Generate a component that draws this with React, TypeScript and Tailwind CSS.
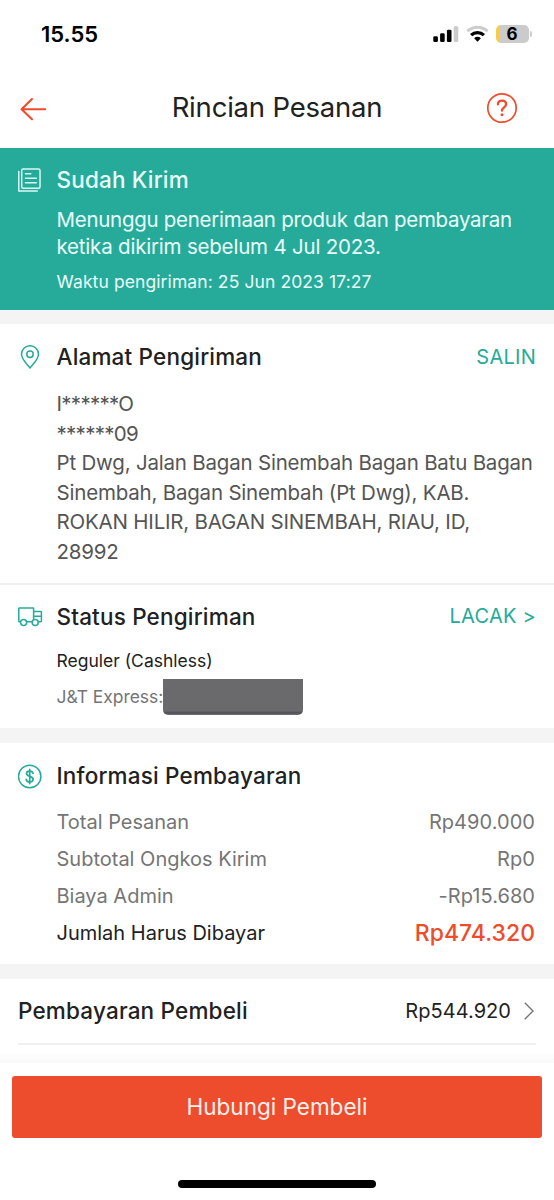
import React from 'react';

interface PaymentRow {
  label: string;
  value: string;
}

const paymentRows: PaymentRow[] = [
  { label: 'Total Pesanan', value: 'Rp490.000' },
  { label: 'Subtotal Ongkos Kirim', value: 'Rp0' },
  { label: 'Biaya Admin', value: '-Rp15.680' },
];

const StatusBar: React.FC = () => (
  <div className="flex h-[68px] items-center justify-between pl-[41px] pr-[22px]">
    <span className="text-[22px] font-semibold leading-none text-black">15.55</span>
    <div className="flex items-center">
      {/* Signal */}
      <svg width="26" height="18" viewBox="0 0 26 18">
        <rect x="0.3" y="11.2" width="4.6" height="5.8" rx="1.3" fill="#000" />
        <rect x="7.1" y="8.2" width="4.6" height="8.8" rx="1.3" fill="#000" />
        <rect x="13.9" y="4.8" width="4.6" height="12.2" rx="1.3" fill="#000" />
        <rect x="20.7" y="1.2" width="4.6" height="15.8" rx="1.3" fill="#cbcbcb" />
      </svg>
      {/* Wifi */}
      <svg className="ml-[7px]" width="23" height="18" viewBox="0 0 23 18" fill="none">
        <path d="M1.4 6.3A14.4 14.4 0 0 1 21.6 6.3" stroke="#cbcbcb" strokeWidth="3" />
        <path d="M5.1 10.2A9.1 9.1 0 0 1 17.9 10.2" stroke="#000" strokeWidth="3.2" />
        <path d="M8.1 13.2A4.9 4.9 0 0 1 14.9 13.2L11.5 16.8Z" fill="#000" />
      </svg>
      {/* Battery */}
      <div className="ml-[7px] flex h-[18px] w-[33px] items-center justify-center overflow-hidden rounded-[5px] bg-[linear-gradient(to_right,#f8cc46_3px,#cbcbcb_3px)]">
        <span className="text-[17px] font-bold leading-none text-black">6</span>
      </div>
      <div className="ml-[1.5px] h-[6px] w-[2px] rounded-r-full bg-[#cbcbcb]"></div>
    </div>
  </div>
);

const Header: React.FC = () => (
  <div className="flex h-20 items-center pl-5 pr-9">
    <svg className="mt-[2px]" width="27" height="24" viewBox="0 0 27 24" fill="none" stroke="#ee4d2d" strokeWidth="2.1" strokeLinecap="round" strokeLinejoin="round">
      <path d="M12 2L1.6 12.2L12 22.2M1.6 12.2H25.2" />
    </svg>
    <h1 className="flex-1 pl-[21px] text-center text-[27.5px] leading-none tracking-[-0.2px] text-[#212121]">Rincian Pesanan</h1>
    <svg width="32" height="32" viewBox="0 0 32 32" fill="none" stroke="#ee4d2d" strokeLinecap="round">
      <circle cx="16" cy="16" r="14.2" strokeWidth="1.7" />
      <path d="M11.9 12.4C12 10 13.7 8.7 16 8.7C18.3 8.7 20.1 10.1 20.1 12.3C20.1 15.2 16 15.5 16 18.7" strokeWidth="2.3" />
      <circle cx="16" cy="22.8" r="1.5" fill="#ee4d2d" stroke="none" />
    </svg>
  </div>
);

const NoteIcon: React.FC = () => (
  <svg width="23" height="24" viewBox="0.4 0 23.6 24" preserveAspectRatio="none" fill="none" stroke="#d9fbf4" strokeWidth="1.5" strokeLinecap="round" strokeLinejoin="round">
    <rect x="4.2" y="1" width="18.8" height="19.2" rx="1.5" />
    <path d="M1.2 3.6V22.9H20.2M8 5.8H13.6M8 10.3H19.2M8 14.8H19.2" />
  </svg>
);

const PinIcon: React.FC = () => (
  <svg width="24" height="24" viewBox="0 0 24 24" fill="none" stroke="#26aa99" strokeWidth="1.5" strokeLinejoin="round">
    <path d="M12 23C9.2 19.2 3.5 14.2 3.5 9.2A8.5 8.4 0 0 1 20.5 9.2C20.5 14.2 14.8 19.2 12 23Z" />
    <circle cx="12" cy="9.2" r="3.2" />
  </svg>
);

const TruckIcon: React.FC = () => (
  <svg width="25" height="20" viewBox="0.4 0 25 20" fill="none" stroke="#26aa99" strokeWidth="1.5" strokeLinejoin="round">
    <path d="M2.9 14.8H1.8A0.6 0.6 0 0 1 1.2 14.2V1.6A0.6 0.6 0 0 1 1.8 1H15.4A0.6 0.6 0 0 1 16 1.6V13M9 14.8H14.6M16 4.4H23A0.8 0.8 0 0 1 23.8 5.2V14A0.8 0.8 0 0 1 23 14.8H20.6M16.4 9.2H23.6" />
    <circle cx="6" cy="15.4" r="3" />
    <circle cx="17.6" cy="15.4" r="3" />
  </svg>
);

const DollarIcon: React.FC = () => (
  <svg width="25" height="25" viewBox="0.8 0 25 25" fill="none" stroke="#26aa99" strokeWidth="1.5" strokeLinecap="round">
    <circle cx="12.5" cy="12.5" r="11.2" />
    <path d="M15.8 9.4C15.6 7.9 14.3 7.1 12.5 7.1C10.7 7.1 9.3 8 9.3 9.6C9.3 13.1 15.9 11.7 15.9 15.2C15.9 16.9 14.4 17.9 12.5 17.9C10.6 17.9 9.2 17 9 15.3M12.5 5.4V19.6" strokeWidth="1.7" />
  </svg>
);

interface SectionTitleProps {
  icon: React.ReactNode;
  title: string;
  action?: React.ReactNode;
}

const SectionTitle: React.FC<SectionTitleProps> = ({ icon, title, action }) => (
  <div className="flex h-7 items-center">
    <div className="flex w-[38.5px] flex-shrink-0 items-center">{icon}</div>
    <h2 className="flex-1 text-[22.5px] font-medium leading-7 tracking-[0.18px]">{title}</h2>
    {action && <button className="text-[20px] leading-7 tracking-[0.25px] text-[#26aa99]">{action}</button>}
  </div>
);

const App: React.FC = () => {
  return (
    <div className="flex h-[1200px] w-[554px] flex-col overflow-hidden bg-white font-['Inter',sans-serif] text-[#212121]">
      <StatusBar />
      <Header />

      {/* Order status */}
      <section className="h-[162px] bg-[#26aa99] pl-[18px] pr-[18px] pt-[18px] text-[#e9fffb]">
        <SectionTitle icon={<NoteIcon />} title="Sudah Kirim" />
        <div className="pl-[38.5px]">
          <p className="mt-[13px] whitespace-nowrap text-[20.5px] leading-[26.5px] tracking-[-0.28px]">
            Menunggu penerimaan produk dan pembayaran
            <br />
            <span className="tracking-[-0.2px]">ketika dikirim sebelum 4 Jul 2023.</span>
          </p>
          <p className="mt-[10px] text-[17.5px] leading-6 tracking-[0.1px]">Waktu pengiriman: 25 Jun 2023 17:27</p>
        </div>
      </section>
      <div className="h-[14px] bg-[#f4f4f4]"></div>

      {/* Shipping address */}
      <section className="h-[261px] border-b-2 border-[#f0f0f0] px-[18px] pt-[19px]">
        <SectionTitle icon={<PinIcon />} title="Alamat Pengiriman" action="SALIN" />
        <div className="mt-[18px] whitespace-nowrap pl-[38.5px] text-[20.5px] leading-[29.6px] tracking-[-0.2px] text-[#555]">
          <p className="tracking-[-0.72px]">I******O</p>
          <p className="tracking-[-0.72px]">******09</p>
          <p>
            Pt Dwg, Jalan Bagan Sinembah Bagan Batu Bagan
            <br />
            Sinembah, Bagan Sinembah (Pt Dwg), KAB.
            <br />
            ROKAN HILIR, BAGAN SINEMBAH, RIAU, ID,
            <br />
            28992
          </p>
        </div>
      </section>

      {/* Shipping status */}
      <section className="h-[143px] px-[18px] pt-[18px]">
        <SectionTitle
          icon={<TruckIcon />}
          title="Status Pengiriman"
          action={<span className="block pb-[3px]">LACAK &gt;</span>}
        />
        <div className="pl-[38.5px] text-[17.5px]">
          <p className="mt-[18px] leading-6">Reguler (Cashless)</p>
          <div className="mt-[5px] flex h-[37px] items-center">
            <span className="w-[106.5px] whitespace-nowrap pt-px leading-6 tracking-[-0.05px] text-[#757575]">J&amp;T Express:</span>
            <span className="h-[36px] w-[140px] rounded-b-[5px] bg-[linear-gradient(to_bottom,#6a6a6c_32px,#4b4c56_34px,#77777c_36px)]"></span>
          </div>
        </div>
      </section>
      <div className="h-[15px] bg-[#f4f4f4]"></div>

      {/* Payment info */}
      <section className="h-[221px] px-[18px] pt-[19px]">
        <SectionTitle icon={<DollarIcon />} title="Informasi Pembayaran" />
        <div className="mt-[14px] pl-[38.5px] pr-px text-[20px] leading-[37px]">
          {paymentRows.map(row => (
            <div key={row.label} className="flex justify-between text-[#757575]">
              <span>{row.label}</span>
              <span className="tracking-[0.05px]">{row.value}</span>
            </div>
          ))}
          <div className="flex justify-between">
            <span>Jumlah Harus Dibayar</span>
            <span className="text-[23px] font-medium text-[#ee4d2d]">Rp474.320</span>
          </div>
        </div>
      </section>
      <div className="h-[15px] bg-[#f4f4f4]"></div>

      {/* Buyer payment */}
      <section className="h-[84px] bg-[linear-gradient(to_bottom,#fff_72px,#f9f9f9_84px)] px-[18px]">
        <div className="flex h-[66px] items-center border-b-2 border-[#f0f0f0]">
          <h2 className="flex-1 text-[22.5px] font-medium tracking-[0.18px]">Pembayaran Pembeli</h2>
          <span className="text-[20px] tracking-[0.05px]">Rp544.920</span>
          <svg className="ml-[13px] mr-[2px]" width="10" height="18" viewBox="0 0 10 18" fill="none" stroke="#757575" strokeWidth="1.4">
            <path d="M0.8 0.8L9 9L0.8 17.2" />
          </svg>
        </div>
      </section>

      {/* Bottom action */}
      <footer className="flex flex-1 flex-col items-center px-3 pt-[13px]">
        <button className="h-[62px] w-full rounded-[3px] bg-[#ee4d2d] text-[22.5px] text-[#fff1ed]">Hubungi Pembeli</button>
        <div className="mt-[42px] h-2 w-[198px] rounded-full bg-black"></div>
      </footer>
    </div>
  );
};

export default App;
